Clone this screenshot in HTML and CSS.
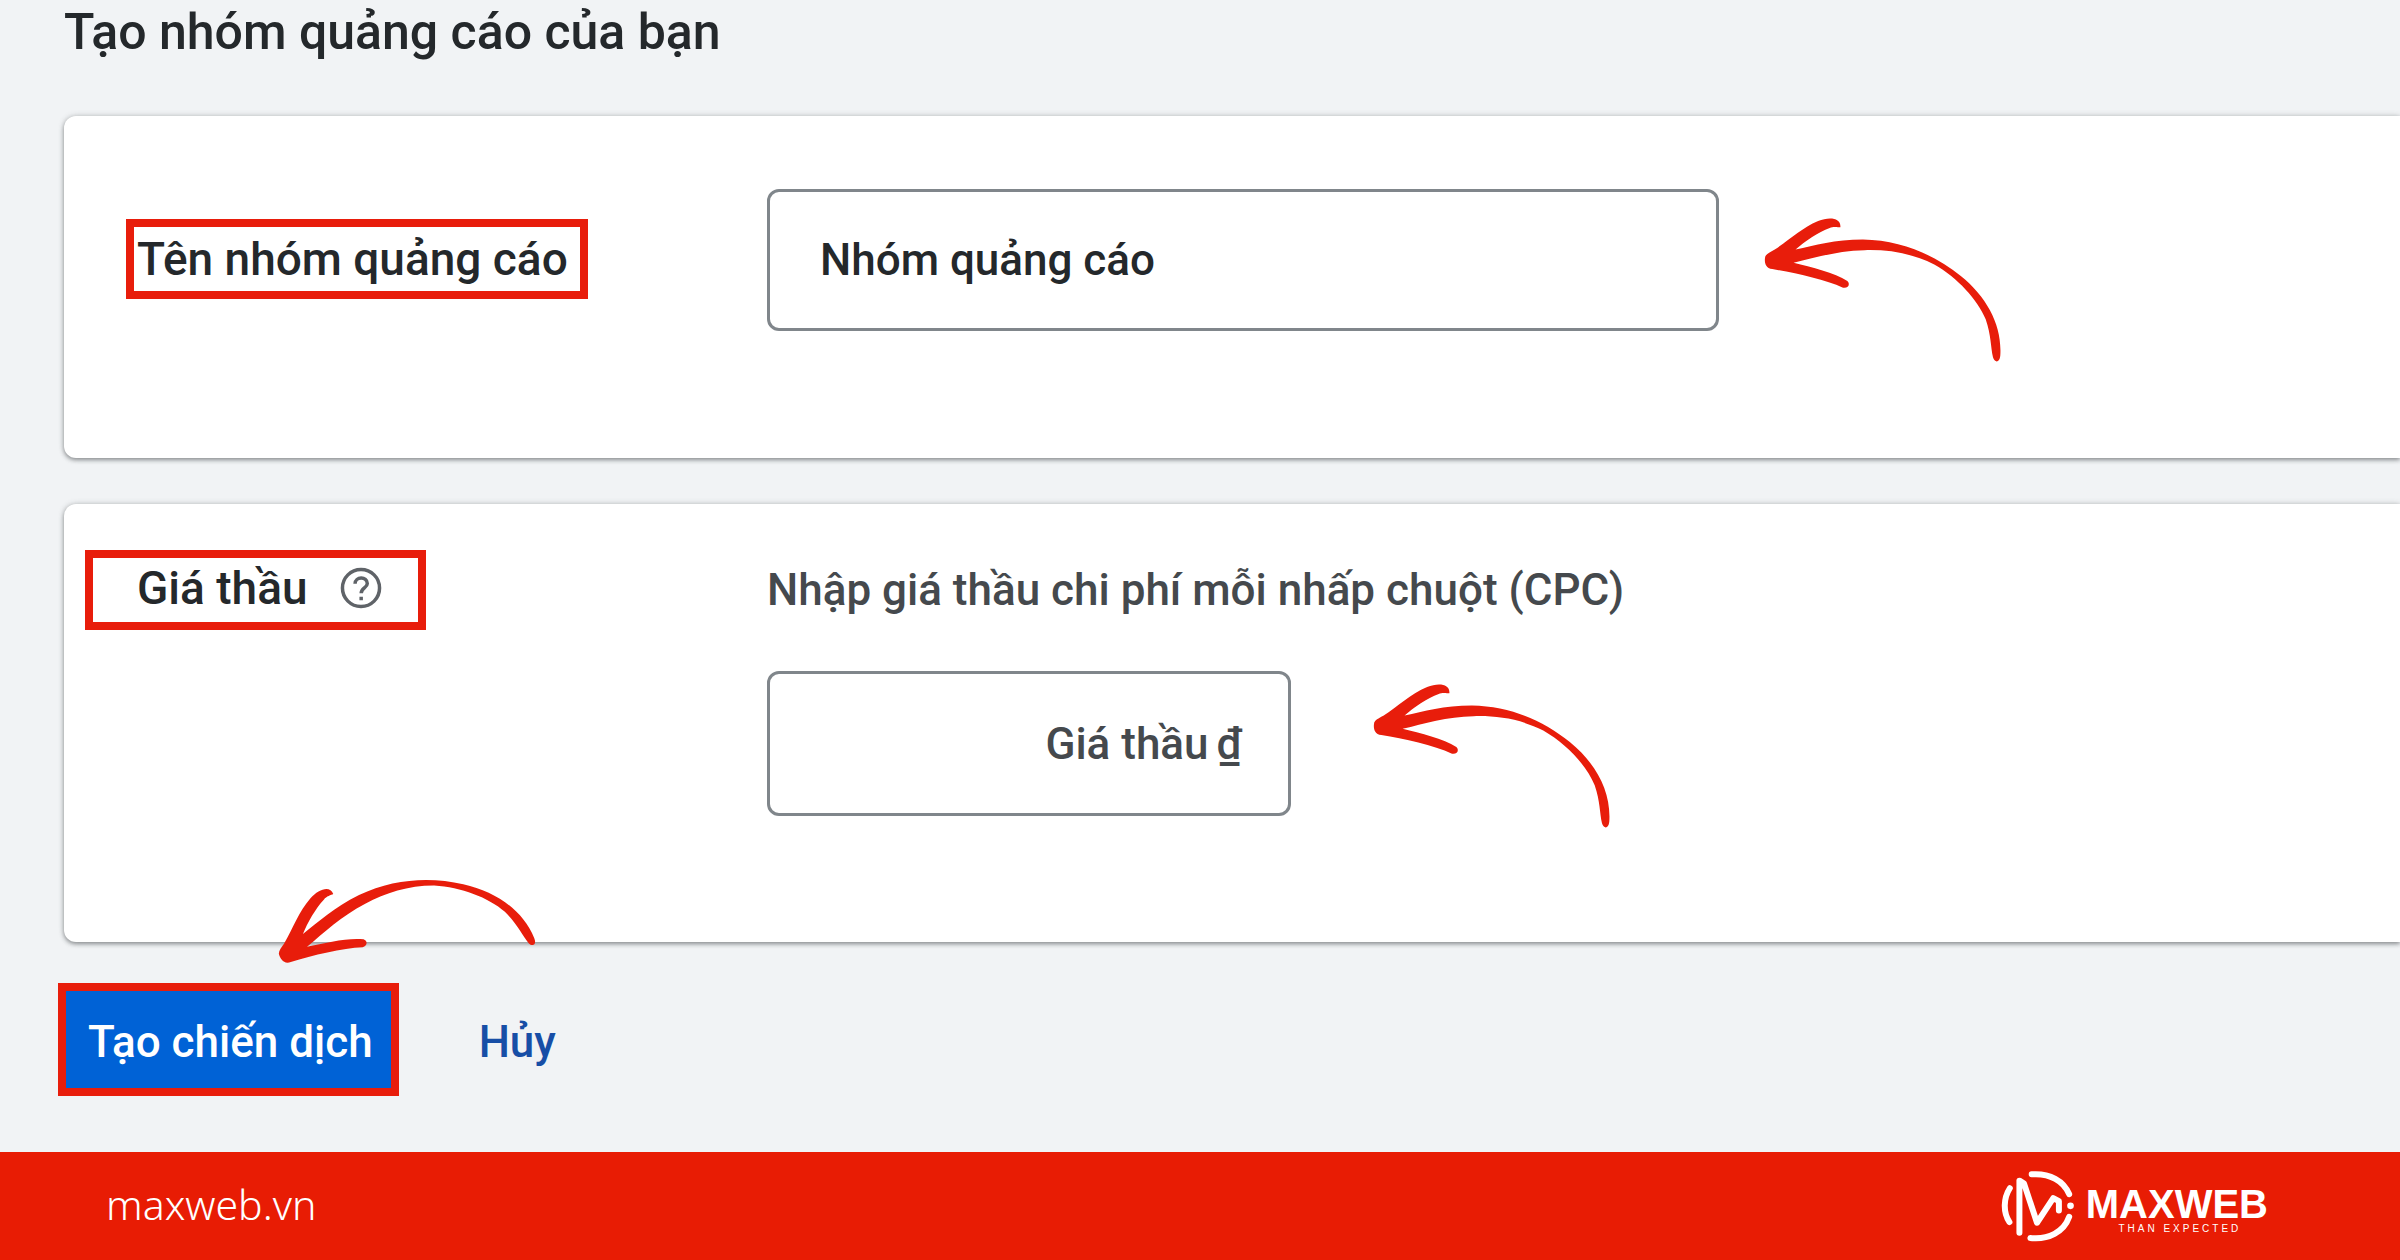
FILE: index.html
```html
<!DOCTYPE html>
<html lang="vi">
<head>
    <meta charset="UTF-8">
    <meta name="viewport" content="width=device-width, initial-scale=1.0">
    <title>Tạo nhóm quảng cáo</title>
    <link rel="stylesheet" href="styles.css">
</head>

<body>
    <!-- Shared arrow shape -->
    <svg class="defs" width="0" height="0" aria-hidden="true">
        <defs>
            <path id="arrow" d="M190 235 C190 225 205 218 218 211 C265 180 300 145 350 124 C385 110 420 115 417 143 C410 143 395 140 385 145 C350 158 310 185 282 210 C340 198 400 180 485 180 C600 182 700 225 780 290 C860 355 905 440 899 530 C897 552 882 552 877 535 C870 505 872 470 855 420 C830 360 770 295 700 255 C630 220 560 210 490 212 C410 213 340 235 276 250 C330 263 400 280 438 305 C448 315 440 328 425 325 C370 300 280 280 212 269 C190 268 188 245 190 235 Z" />
        </defs>
    </svg>

    <main>
        <h1>Tạo nhóm quảng cáo của bạn</h1>
        <form>
            <div class="card name-card">
                <div class="label-column">
                    <label class="highlight name-label" for="group-name">Tên nhóm quảng cáo</label>
                </div>
                <div class="field">
                    <input type="text" class="name-input" id="group-name" value="Nhóm quảng cáo" />
                    <svg class="arrow" viewBox="188 115 712 434" aria-hidden="true"><use href="#arrow" /></svg>
                </div>
            </div>

            <div class="card bid-card">
                <div class="label-column">
                    <div class="highlight bid-label">
                        <label for="bid">Giá thầu</label>
                        <svg class="help" viewBox="0 0 24 24" aria-hidden="true">
                            <circle cx="12" cy="12" r="10.6" />
                            <path d="M8.6 9.6 C8.6 5.2 15.6 5.2 15.6 9.4 C15.6 12 12.1 12 12.1 15" />
                            <path d="M12.1 17 V19" />
                        </svg>
                    </div>
                </div>
                <div class="bid-column">
                    <p>Nhập giá thầu chi phí mỗi nhấp chuột (CPC)</p>
                    <div class="field">
                        <div class="bid-box">
                            <input type="text" class="bid-input" id="bid" placeholder="Giá thầu" />
                            <span>₫</span>
                        </div>
                        <svg class="arrow" viewBox="188 115 712 434" aria-hidden="true"><use href="#arrow" /></svg>
                    </div>
                </div>
            </div>

            <div class="buttons">
                <button type="button" class="create">Tạo chiến dịch</button>
                <button type="button" class="cancel">Hủy</button>
                <svg class="create-arrow" viewBox="110 50 790 270" aria-hidden="true">
                    <use href="#arrow" transform="translate(130 295) rotate(-26.4) translate(-200 -245)" />
                </svg>
            </div>
        </form>
    </main>

    <footer>
        <a href="#">maxweb.vn</a>
        <div class="logo">
            <svg class="mark" viewBox="60 85 225 220" aria-hidden="true">
                <path class="ring" d="M155 98 C210 94 252 118 268 158 M268 226 C252 272 205 296 151 290 M89 140 C70 170 68 212 88 242" />
                <path class="letter" d="M118 274 V117 L132 126 L171 244 L220 170 L237 179 V207" />
                <circle cx="272" cy="193" r="10" />
            </svg>
            <div class="logo-text">
                <strong>MAXWEB</strong>
                <small>THAN EXPECTED</small>
            </div>
        </div>
    </footer>
</body>
</html>
```

FILE: styles.css
```css
* {
    box-sizing: border-box;
}

body {
    margin: 0;
    min-height: 100vh;
    display: flex;
    flex-direction: column;
    font-family: Roboto, "Noto Sans", sans-serif;
    font-size: 44px;
    font-weight: 500;
    line-height: 52px;
    color: #24282b;
    background-color: #f1f3f5;
    overflow-x: hidden;
}

.defs {
    position: absolute;
}

main {
    flex: 1;
    padding: 6px 0 0 64px;
}

h1 {
    margin: 0 0 58px;
    font-size: 50px;
    font-weight: 500;
    line-height: 52px;
}

input,
button {
    font: inherit;
    color: inherit;
}

.card {
    display: flex;
    align-items: flex-start;
    padding-left: 21px;
    background-color: white;
    border-radius: 12px 0 0 12px;
    box-shadow: 0 2px 4px rgba(60, 64, 67, 0.5), 0 0 6px rgba(60, 64, 67, 0.2);
}

.name-card {
    padding-top: 73px;
    padding-bottom: 127px;
    margin-bottom: 46px;
}

.bid-card {
    padding-top: 46px;
    padding-bottom: 126px;
    margin-bottom: 41px;
}

.label-column {
    flex: 0 0 682px;
}

.highlight {
    display: inline-flex;
    align-items: center;
    height: 80px;
    border: 8px solid #e81d0b;
    font-size: 46px;
}

.name-label {
    margin: 30px 0 0 41px;
    padding: 0 12px 0 3px;
}

.bid-label {
    gap: 32px;
    padding: 0 36px 4px 44px;
}

.help {
    width: 42px;
    height: 42px;
    fill: none;
    stroke: #5f6368;
    stroke-width: 2;
}

.field {
    display: flex;
    align-items: flex-start;
    gap: 45px;
}

.name-input {
    width: 952px;
    height: 142px;
    padding: 0 50px;
    border: 3px solid #80868b;
    border-radius: 12px;
    background-color: white;
}

.arrow {
    width: 237px;
    height: 144px;
    margin-top: 29px;
    margin-bottom: -31px;
    fill: #e81d0b;
}

.bid-column p {
    margin: 14px 0 55px;
    color: #45494d;
}

.bid-column .field {
    gap: 82px;
}

.bid-column .arrow {
    margin-top: 13px;
    margin-bottom: -12px;
}

.bid-box {
    display: flex;
    align-items: center;
    gap: 8px;
    width: 524px;
    height: 145px;
    padding-right: 46px;
    border: 3px solid #80868b;
    border-radius: 12px;
    color: #45494d;
}

.bid-input {
    flex: 1;
    min-width: 0;
    padding: 0;
    border: none;
    background: none;
    text-align: right;
}

.bid-input::placeholder {
    color: inherit;
    opacity: 1;
}

.buttons {
    position: relative;
    display: flex;
    align-items: center;
    gap: 80px;
    margin-left: -6px;
}

.create {
    height: 113px;
    padding: 4px 18px 0 22px;
    border: 8px solid #e81d0b;
    background-color: #0062d6;
    color: white;
    cursor: pointer;
}

.cancel {
    padding: 4px 0 0;
    border: none;
    background: none;
    color: #174ea6;
    cursor: pointer;
}

.create-arrow {
    position: absolute;
    left: 219px;
    bottom: 131px;
    width: 263px;
    height: 90px;
    fill: #e81d0b;
}

footer {
    display: flex;
    justify-content: space-between;
    align-items: center;
    height: 108px;
    padding: 0 132px 0 106px;
    background-color: #e81c04;
    color: white;
}

footer a {
    padding-bottom: 4px;
    font-family: "Noto Sans", sans-serif;
    font-size: 41px;
    font-weight: 300;
    color: white;
    text-decoration: none;
}

.logo {
    display: flex;
    align-items: center;
    gap: 11px;
}

.mark {
    width: 75px;
    height: 73px;
    fill: white;
}

.ring,
.letter {
    fill: none;
    stroke: white;
    stroke-width: 18;
    stroke-linecap: round;
    stroke-linejoin: round;
}

.logo-text {
    display: flex;
    flex-direction: column;
    align-items: center;
    padding-top: 10px;
    font-family: "Liberation Sans", Arial, sans-serif;
}

.logo-text strong {
    font-size: 40px;
    line-height: 36px;
}

.logo-text small {
    padding-left: 6px;
    font-size: 10px;
    font-weight: 400;
    line-height: 14px;
    letter-spacing: 3px;
}
```
